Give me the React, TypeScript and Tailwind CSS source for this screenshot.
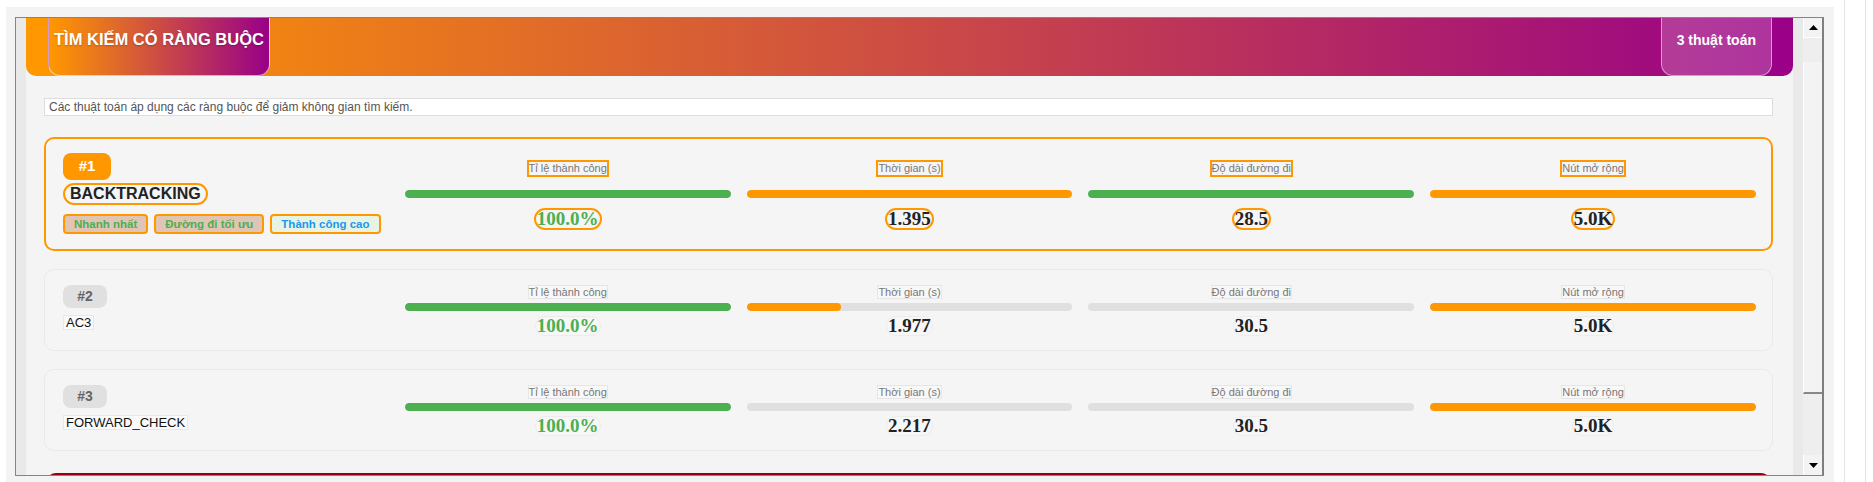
import React from 'react';

type Metric = { value: string; pct: number; fill: string; tone: string };
type Tag = { label: string; className: string };
type Algo = { rank: number; name: string; best?: boolean; tags?: Tag[]; metrics: Metric[] };

const LABELS = ['Tỉ lệ thành công', 'Thời gian (s)', 'Độ dài đường đi', 'Nút mở rộng'];

const ALGOS: Algo[] = [
  {
    rank: 1,
    name: 'BACKTRACKING',
    best: true,
    tags: [
      { label: 'Nhanh nhất', className: 'bg-[#e0c4b5] text-[#4caf50]' },
      { label: 'Đường đi tối ưu', className: 'bg-[#e0c4b5] text-[#4caf50]' },
      { label: 'Thành công cao', className: 'bg-[#e8f4e3] text-[#2196f3]' },
    ],
    metrics: [
      { value: '100.0%', pct: 100, fill: 'bg-[#4caf50]', tone: 'text-[#4caf50]' },
      { value: '1.395', pct: 100, fill: 'bg-[#ff9800]', tone: 'text-[#222]' },
      { value: '28.5', pct: 100, fill: 'bg-[#4caf50]', tone: 'text-[#222]' },
      { value: '5.0K', pct: 100, fill: 'bg-[#ff9800]', tone: 'text-[#222]' },
    ],
  },
  {
    rank: 2,
    name: 'AC3',
    metrics: [
      { value: '100.0%', pct: 100, fill: 'bg-[#4caf50]', tone: 'text-[#4caf50]' },
      { value: '1.977', pct: 29, fill: 'bg-[#ff9800]', tone: 'text-[#222]' },
      { value: '30.5', pct: 0, fill: 'bg-[#4caf50]', tone: 'text-[#222]' },
      { value: '5.0K', pct: 100, fill: 'bg-[#ff9800]', tone: 'text-[#222]' },
    ],
  },
  {
    rank: 3,
    name: 'FORWARD_CHECK',
    metrics: [
      { value: '100.0%', pct: 100, fill: 'bg-[#4caf50]', tone: 'text-[#4caf50]' },
      { value: '2.217', pct: 0, fill: 'bg-[#ff9800]', tone: 'text-[#222]' },
      { value: '30.5', pct: 0, fill: 'bg-[#4caf50]', tone: 'text-[#222]' },
      { value: '5.0K', pct: 100, fill: 'bg-[#ff9800]', tone: 'text-[#222]' },
    ],
  },
];

const MetricCell: React.FC<{ label: string; metric: Metric; best?: boolean }> = ({ label, metric, best }) => (
  <div className={`flex flex-col items-center ${best ? 'mt-[7px]' : ''}`}>
    <span
      className={`text-[11px] text-[#777] ${
        best ? 'border-2 border-[#ff9800] leading-[13px]' : 'border border-[#e6e6e6] bg-[#f8f8f8] leading-[12px]'
      }`}
    >
      {label}
    </span>
    <div className={`w-full h-[8px] rounded-full bg-[#e0e0e0] overflow-hidden ${best ? 'mt-[13px]' : 'mt-[4px]'}`}>
      <div className={`h-full rounded-full ${metric.fill}`} style={{ width: `${metric.pct}%` }} />
    </div>
    <span
      className={`rounded-full px-[1px] font-['Liberation_Serif',serif] text-[19px] leading-[18px] font-bold ${metric.tone} ${
        best ? 'mt-[10px] border-2 border-[#ff9800]' : 'mt-[5px] border border-[#ececec] bg-[#f7f7f7]'
      }`}
    >
      {metric.value}
    </span>
  </div>
);

const AlgoCard: React.FC<{ algo: Algo }> = ({ algo }) => {
  const best = algo.best;
  return (
    <div
      className={`grid grid-cols-5 gap-x-4 items-start rounded-[10px] bg-[#f5f5f5] ${
        best
          ? 'border-2 border-[#ff9800] pl-[17px] pr-[15px] pt-[14px] pb-[15px]'
          : 'border border-[#e9e9e9] pl-[18px] pr-[16px] pt-[15px] pb-[14px]'
      }`}
    >
      <div className="flex flex-col items-start">
        {best ? (
          <span className="w-[48px] h-[27px] rounded-[8px] bg-[#ff9800] text-white text-[15px] font-bold flex items-center justify-center">
            #{algo.rank}
          </span>
        ) : (
          <span className="w-[44px] h-[23px] rounded-[8px] bg-[#e0e0e0] text-[#666] text-[14px] font-bold flex items-center justify-center">
            #{algo.rank}
          </span>
        )}
        {best ? (
          <span className="mt-[3px] rounded-full border-2 border-[#ff9800] px-[5px] text-[16px] leading-[18px] font-bold text-[#222]">
            {algo.name}
          </span>
        ) : (
          <span className="mt-[7px] border border-[#e8e8e8] bg-[#fafafa] px-[2px] text-[13px] leading-[13px] text-[#111]">
            {algo.name}
          </span>
        )}
        {algo.tags && (
          <div className="mt-[9px] flex gap-[6px]">
            {algo.tags.map((t) => (
              <span
                key={t.label}
                className={`h-[20px] rounded-[4px] border-2 border-[#ff9800] px-[9px] text-[11.5px] leading-[16px] font-bold ${t.className}`}
              >
                {t.label}
              </span>
            ))}
          </div>
        )}
      </div>
      {algo.metrics.map((m, i) => (
        <MetricCell key={LABELS[i]} label={LABELS[i]} metric={m} best={best} />
      ))}
    </div>
  );
};

const Triangle: React.FC<{ down?: boolean }> = ({ down }) => (
  <svg width="9" height="5" viewBox="0 0 9 5">
    <polygon points={down ? '0,0 9,0 4.5,5' : '4.5,0 9,5 0,5'} fill="#000" />
  </svg>
);

const Scrollbar: React.FC = () => (
  <div className="w-[21px] shrink-0 flex flex-col border-r-2 border-[#7f7f7f] bg-[#eeeeee]">
    <div className="h-[20px] shrink-0 bg-[#f3f3f3] border-l border-white border-b border-[#8a8a8a] flex items-center justify-center">
      <Triangle />
    </div>
    <div className="h-[24px] shrink-0" />
    <div className="h-[332px] shrink-0 bg-[#f3f3f3] border-l border-white border-b-2 border-b-[#888]" />
    <div className="flex-1" />
    <div className="h-[20px] shrink-0 bg-[#f3f3f3] border-l border-white flex items-center justify-center">
      <Triangle down />
    </div>
  </div>
);

export default function App() {
  return (
    <div className="h-[482px] overflow-hidden bg-white flex font-['Liberation_Sans',Arial,sans-serif]">
      <div className="ml-[6px] mt-[7px] w-[1828px] h-[475px] shrink-0 bg-[#f3f3f3] pl-[9px] pt-[10px]">
        <div className="flex w-[1809px] h-[459px] border-l border-t border-b border-[#858585]">
          {/* scroll viewport */}
          <div className="flex-1 px-[10px] bg-[#e9e9e9] overflow-hidden">
            <div className="h-full bg-[#f4f4f4] overflow-hidden">
              {/* section header */}
              <div className="h-[58px] flex justify-between items-start pl-[22px] pr-[21px] rounded-b-[10px] bg-[linear-gradient(90deg,#ff9800,#990088)]">
                <div className="h-full px-[5px] pt-[11px] border-x border-b border-white/60 rounded-b-[12px] bg-[linear-gradient(90deg,#ff9800,#990088)]">
                  <h2 className="text-[16.5px] leading-[20px] font-bold text-white [text-shadow:0_1px_2px_rgba(0,0,0,0.25)]">
                    TÌM KIẾM CÓ RÀNG BUỘC
                  </h2>
                </div>
                <div className="h-full px-[15px] pt-[10px] border-x border-b border-white/50 rounded-b-[12px] bg-white/20">
                  <span className="text-[14px] leading-[20px] font-bold text-white">3 thuật toán</span>
                </div>
              </div>

              <div className="pl-[18px] pr-[20px] pt-[22px]">
                <p className="h-[18px] border border-[#dddddd] bg-white pl-[4px] text-[12px] leading-[16px] text-[#555]">
                  Các thuật toán áp dụng các ràng buộc để giảm không gian tìm kiếm.
                </p>

                <div className="mt-[21px] flex flex-col gap-[18px]">
                  {ALGOS.map((a) => (
                    <AlgoCard key={a.rank} algo={a} />
                  ))}
                </div>

                {/* next section, scrolled out of view */}
                <div className="mt-[22px] mx-[2px] h-[10px] rounded-t-[10px] bg-[#990012]" />
              </div>
            </div>
          </div>
          <Scrollbar />
        </div>
      </div>
      <div className="ml-[10px] w-px h-full bg-[#e4e4e4]" />
      <div className="ml-[20px] w-px h-full bg-[#e4e4e4]" />
    </div>
  );
}
